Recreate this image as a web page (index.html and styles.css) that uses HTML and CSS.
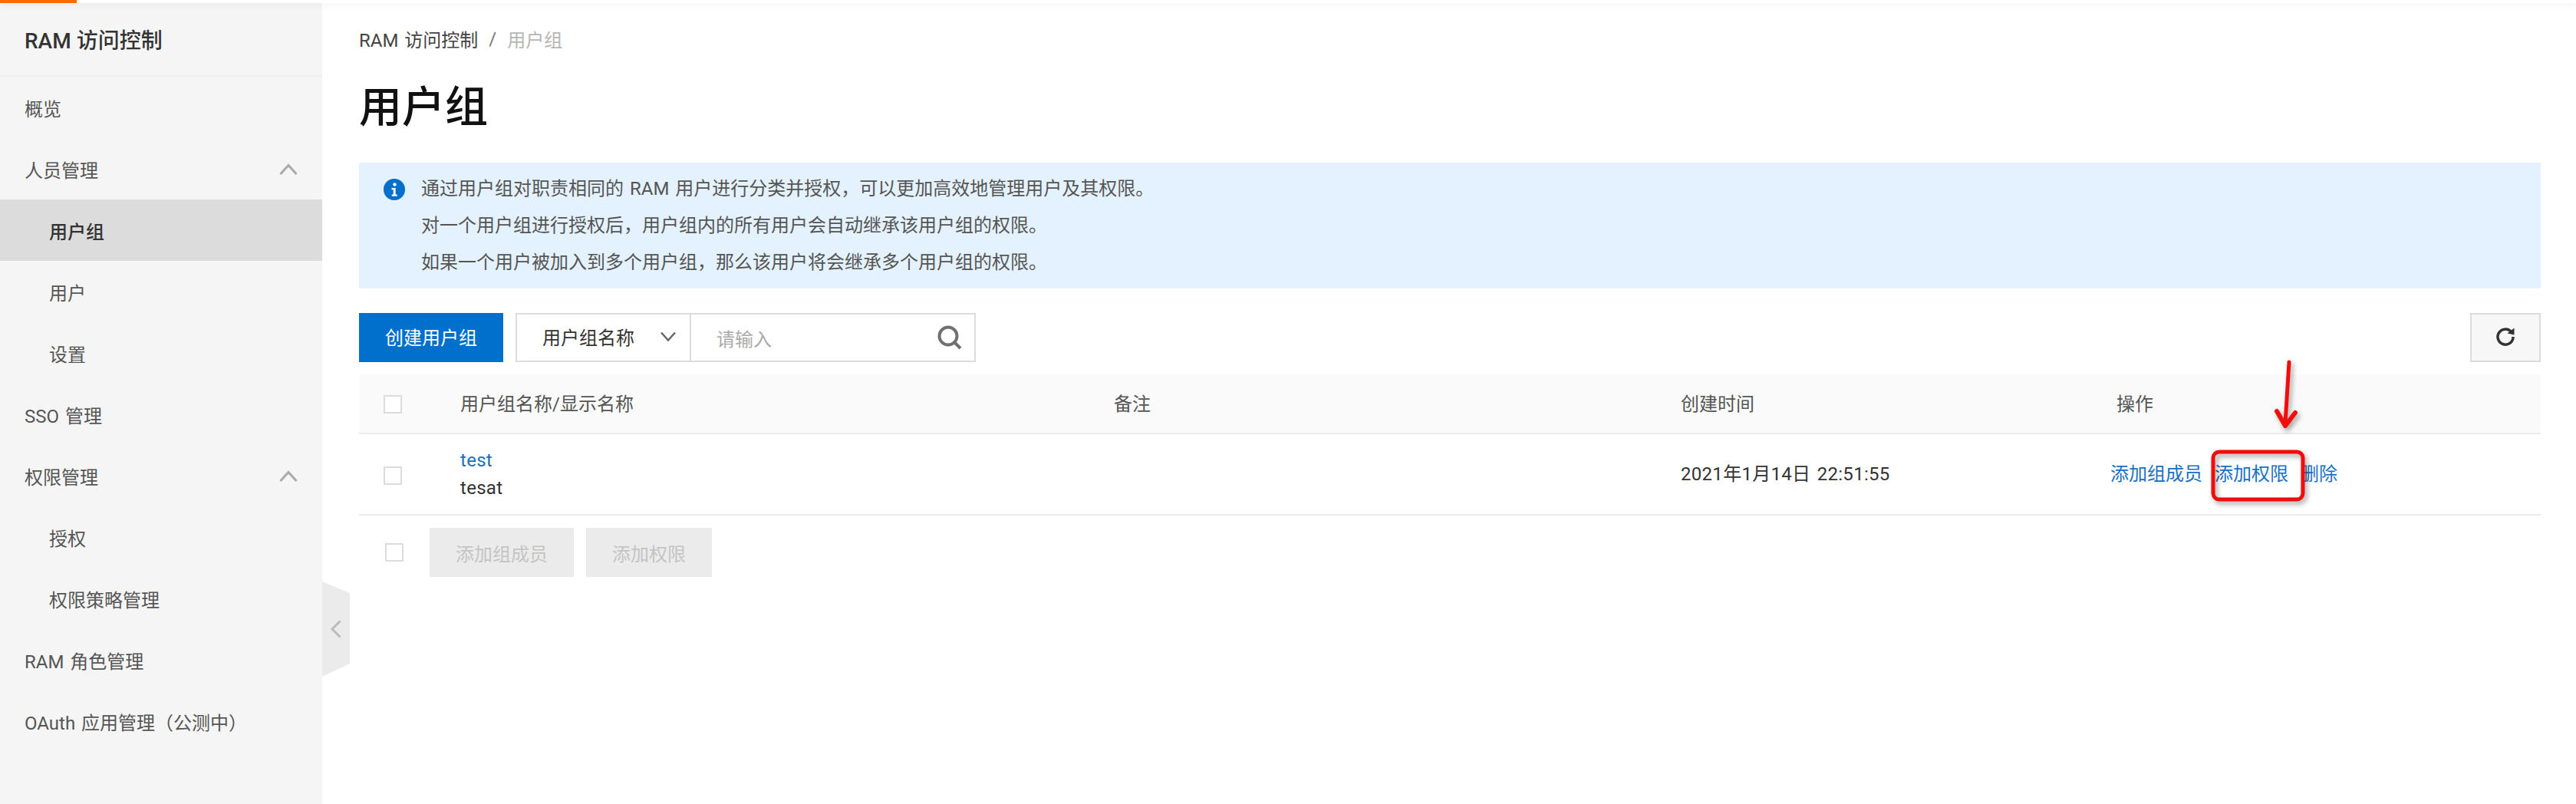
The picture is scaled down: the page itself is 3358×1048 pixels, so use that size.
FILE: index.html
```html
<!DOCTYPE html>
<html lang="zh-CN">
<head>
  <meta charset="UTF-8" />
  <title>用户组 - RAM 访问控制</title>
  <link rel="stylesheet" href="styles.css">
</head>
<body>
  <div class="topbar"><div class="topbar-logo"></div></div>

  <div class="layout">
    <aside class="sidebar">
      <div class="sidebar-title">RAM 访问控制</div>
      <nav class="nav">
        <a class="nav-item">概览</a>
        <a class="nav-item">人员管理
          <svg class="nav-arrow" viewBox="0 0 24 15"><path d="M1.5 14 12 2.5 22.500 14"/></svg>
        </a>
        <a class="nav-item sub active">用户组</a>
        <a class="nav-item sub">用户</a>
        <a class="nav-item sub">设置</a>
        <a class="nav-item">SSO 管理</a>
        <a class="nav-item">权限管理
          <svg class="nav-arrow" viewBox="0 0 24 15"><path d="M1.5 14 12 2.500 22.500 14"/></svg>
        </a>
        <a class="nav-item sub">授权</a>
        <a class="nav-item sub">权限策略管理</a>
        <a class="nav-item">RAM 角色管理</a>
        <a class="nav-item">OAuth 应用管理（公测中）</a>
      </nav>
      <div class="collapse-tab">
        <svg class="collapse-arrow" viewBox="0 0 14 24"><path d="M12.500 1.500 2 12l10.500 10.500"/></svg>
      </div>
    </aside>

    <main class="content">
      <div class="breadcrumb">
        <span>RAM 访问控制</span>
        <span class="crumb-sep">/</span>
        <span class="crumb-current">用户组</span>
      </div>
      <h1 class="page-title">用户组</h1>

      <div class="notice">
        <svg class="notice-icon" viewBox="0 0 28 28">
          <circle cx="14" cy="14" r="14" fill="#0070cc"/>
          <circle cx="14.500" cy="7.500" r="2.200" fill="#fff"/>
          <path d="M10.500 12h5.200v8.500h2v2.300h-7v-2.300h2v-6.200h-2.200z" fill="#fff"/>
        </svg>
        <div class="notice-text">
          <p>通过用户组对职责相同的 RAM 用户进行分类并授权，可以更加高效地管理用户及其权限。</p>
          <p>对一个用户组进行授权后，用户组内的所有用户会自动继承该用户组的权限。</p>
          <p>如果一个用户被加入到多个用户组，那么该用户将会继承多个用户组的权限。</p>
        </div>
      </div>

      <div class="toolbar">
        <button class="btn-primary">创建用户组</button>
        <div class="search">
          <div class="search-select">用户组名称
            <svg class="select-arrow" viewBox="0 0 20 13"><path d="M1 1.500 10 11.500 19 1.500"/></svg>
          </div>
          <div class="search-input">
            <span>请输入</span>
            <svg class="search-icon" viewBox="0 0 32 32"><circle cx="14" cy="14" r="11.500"/><path d="M22.500 22.500 30 30"/></svg>
          </div>
        </div>
        <button class="btn-refresh">
          <svg viewBox="0 0 26 26" width="26" height="26">
            <path class="refresh-line" d="M20.500 6.500A10 10 0 1 0 23 13"/>
            <path class="refresh-head" d="M15.500 8.500 24.500 1.500V10.500z"/>
          </svg>
        </button>
      </div>

      <div class="table">
        <div class="table-row table-head">
          <div class="cell-check"><span class="checkbox"></span></div>
          <div class="cell">用户组名称/显示名称</div>
          <div class="cell">备注</div>
          <div class="cell">创建时间</div>
          <div class="cell">操作</div>
        </div>
        <div class="table-row table-body">
          <div class="cell-check"><span class="checkbox"></span></div>
          <div class="cell cell-name">
            <a class="link">test</a>
            <div>tesat</div>
          </div>
          <div class="cell"></div>
          <div class="cell cell-date">2021年1月14日 22:51:55</div>
          <div class="cell cell-actions">
            <a class="link">添加组成员</a>
            <a class="link">添加权限</a>
            <a class="link">删除</a>
          </div>
        </div>
      </div>

      <div class="batch">
        <span class="checkbox"></span>
        <button class="btn-disabled btn-members">添加组成员</button>
        <button class="btn-disabled btn-perms">添加权限</button>
      </div>
    </main>
  </div>

  <!-- red markup drawn on top of the screenshot -->
  <svg class="markup" viewBox="0 0 3358 1048" width="3358" height="1048">
    <defs>
      <filter id="markShadow" x="-30%" y="-30%" width="160%" height="160%">
        <feDropShadow dx="3" dy="4" stdDeviation="3" flood-color="#000" flood-opacity="0.35"/>
      </filter>
    </defs>
    <g filter="url(#markShadow)" fill="none" stroke="#f20d0d" stroke-linecap="round" stroke-linejoin="round">
      <rect x="2885" y="589" width="117" height="62" rx="8" stroke-width="5"/>
      <path d="M2984 472 2979 552" stroke-width="5"/>
      <path d="M2968 536 2979 555 2992 538" stroke-width="6"/>
    </g>
  </svg>
</body>
</html>
```

FILE: styles.css
```css
* {
  box-sizing: border-box;
}

html, body {
  margin: 0;
  padding: 0;
  height: 100%;
  overflow: hidden;
}

body {
  position: relative;
  background: #fff;
  color: #333;
  font-family: Roboto, "Noto Sans CJK SC", sans-serif;
  font-size: 24px;
  word-spacing: 2px;
}

.topbar {
  position: relative;
  z-index: 2;
  height: 4px;
  background: #fff;
  box-shadow: 0 2px 8px rgba(0, 0, 0, 0.08);
}

.topbar-logo {
  width: 100px;
  height: 4px;
  background: #ff6a00;
}

.layout {
  display: flex;
  height: 1044px;
}

/* sidebar */
.sidebar {
  position: relative;
  flex: 0 0 420px;
  background: #f5f5f5;
}

.sidebar-title {
  display: flex;
  align-items: center;
  height: 96px;
  padding-left: 32px;
  border-bottom: 2px solid #eeeeee;
  color: #333;
  font-size: 28px;
  font-weight: 500;
  word-spacing: 0;
}

.nav {
  display: flex;
  flex-direction: column;
}

.nav-item {
  display: flex;
  align-items: center;
  justify-content: space-between;
  height: 80px;
  padding: 1px 32px 0;
  color: #555;
}

.nav-item.sub {
  padding-left: 64px;
}

.nav-item.active {
  background: #dcdcdc;
  color: #333;
  font-weight: 500;
}

.nav-arrow {
  width: 24px;
  height: 15px;
  margin-bottom: 1px;
  fill: none;
  stroke: #aaa;
  stroke-width: 3;
}

.collapse-tab {
  position: absolute;
  top: 754px;
  left: 420px;
  display: flex;
  align-items: center;
  width: 36px;
  height: 124px;
  padding-left: 11px;
  background: #ebebeb;
  clip-path: polygon(0 0, 100% 15px, 100% 107px, 0 100%);
}

.collapse-arrow {
  width: 14px;
  height: 24px;
  fill: none;
  stroke: #bbb;
  stroke-width: 3;
}

/* main */
.content {
  flex: 1;
  padding: 0 46px 0 48px;
}

.breadcrumb {
  display: flex;
  align-items: center;
  height: 93px;
  color: #444;
}

.crumb-sep {
  margin: 0 14px;
  color: #777;
}

.crumb-current {
  color: #b5b5b5;
}

.page-title {
  margin: 0;
  height: 115px;
  padding-top: 3px;
  color: #111;
  font-size: 56px;
  font-weight: 500;
  line-height: 80px;
}

.notice {
  display: flex;
  height: 164px;
  padding: 21px 32px 0;
  background: #e4f1fe;
  color: #555;
}

.notice-icon {
  flex: none;
  width: 28px;
  height: 28px;
  margin-right: 21px;
}

.notice-text {
  margin-top: -11px;
}

.notice-text p {
  margin: 0;
  line-height: 48px;
}

.toolbar {
  display: flex;
  align-items: stretch;
  height: 64px;
  margin-top: 32px;
}

.btn-primary {
  width: 188px;
  padding: 0 0 3px;
  border: 0;
  background: #0070cc;
  color: #fff;
  font: inherit;
}

.search {
  display: flex;
  width: 600px;
  margin-left: 16px;
  border: 2px solid #dcdcdc;
}

.search-select {
  display: flex;
  align-items: center;
  width: 227px;
  padding: 0 0 3px 33px;
  border-right: 2px solid #dcdcdc;
}

.select-arrow {
  width: 20px;
  height: 13px;
  margin-left: 34px;
  fill: none;
  stroke: #666;
  stroke-width: 2.500;
}

.search-input {
  display: flex;
  flex: 1;
  align-items: center;
  justify-content: space-between;
  padding: 0 16px 0 33px;
  color: #aaa;
}

.search-icon {
  width: 32px;
  height: 32px;
  fill: none;
  stroke: #707070;
  stroke-width: 4;
}

.btn-refresh {
  display: flex;
  align-items: center;
  justify-content: center;
  width: 92px;
  margin-left: auto;
  padding: 0 0 2px;
  border: 2px solid #dcdcdc;
  background: #f7f7f7;
}

.refresh-line {
  fill: none;
  stroke: #333;
  stroke-width: 3.500;
}

.refresh-head {
  fill: #333;
}

/* table */
.table {
  margin-top: 16px;
}

.table-row {
  display: grid;
  grid-template-columns: 100px 852px 739px 568px 1fr;
  align-items: center;
  border-bottom: 2px solid #ebebeb;
}

.table-head {
  height: 78px;
  background: #fafafa;
  color: #555;
}

.table-head .cell {
  padding-bottom: 3px;
}

.table-body {
  height: 106px;
  line-height: 36px;
}

.cell-check {
  display: flex;
  padding: 2px 0 0 32px;
}

.table-body .cell-check {
  padding-top: 3px;
}

.cell {
  padding-left: 32px;
}

.cell-name,
.cell-date {
  letter-spacing: 0.3px;
}

.cell-actions {
  display: flex;
  gap: 16px;
  padding-left: 24px;
}

.checkbox {
  display: inline-block;
  width: 24px;
  height: 24px;
  border: 2px solid #dcdcdc;
  background: #fff;
}

.link {
  color: #1a6fc4;
}

.batch {
  display: flex;
  align-items: center;
  margin-top: 16px;
  padding-left: 34px;
}

.batch .checkbox {
  margin-right: 34px;
}

.btn-disabled {
  height: 64px;
  margin-right: 16px;
  padding: 0;
  border: 0;
  background: #ebebeb;
  color: #c4c4c4;
  font: inherit;
}

.btn-members {
  width: 188px;
}

.btn-perms {
  width: 164px;
}

.markup {
  position: absolute;
  top: 0;
  left: 0;
  pointer-events: none;
}
```
